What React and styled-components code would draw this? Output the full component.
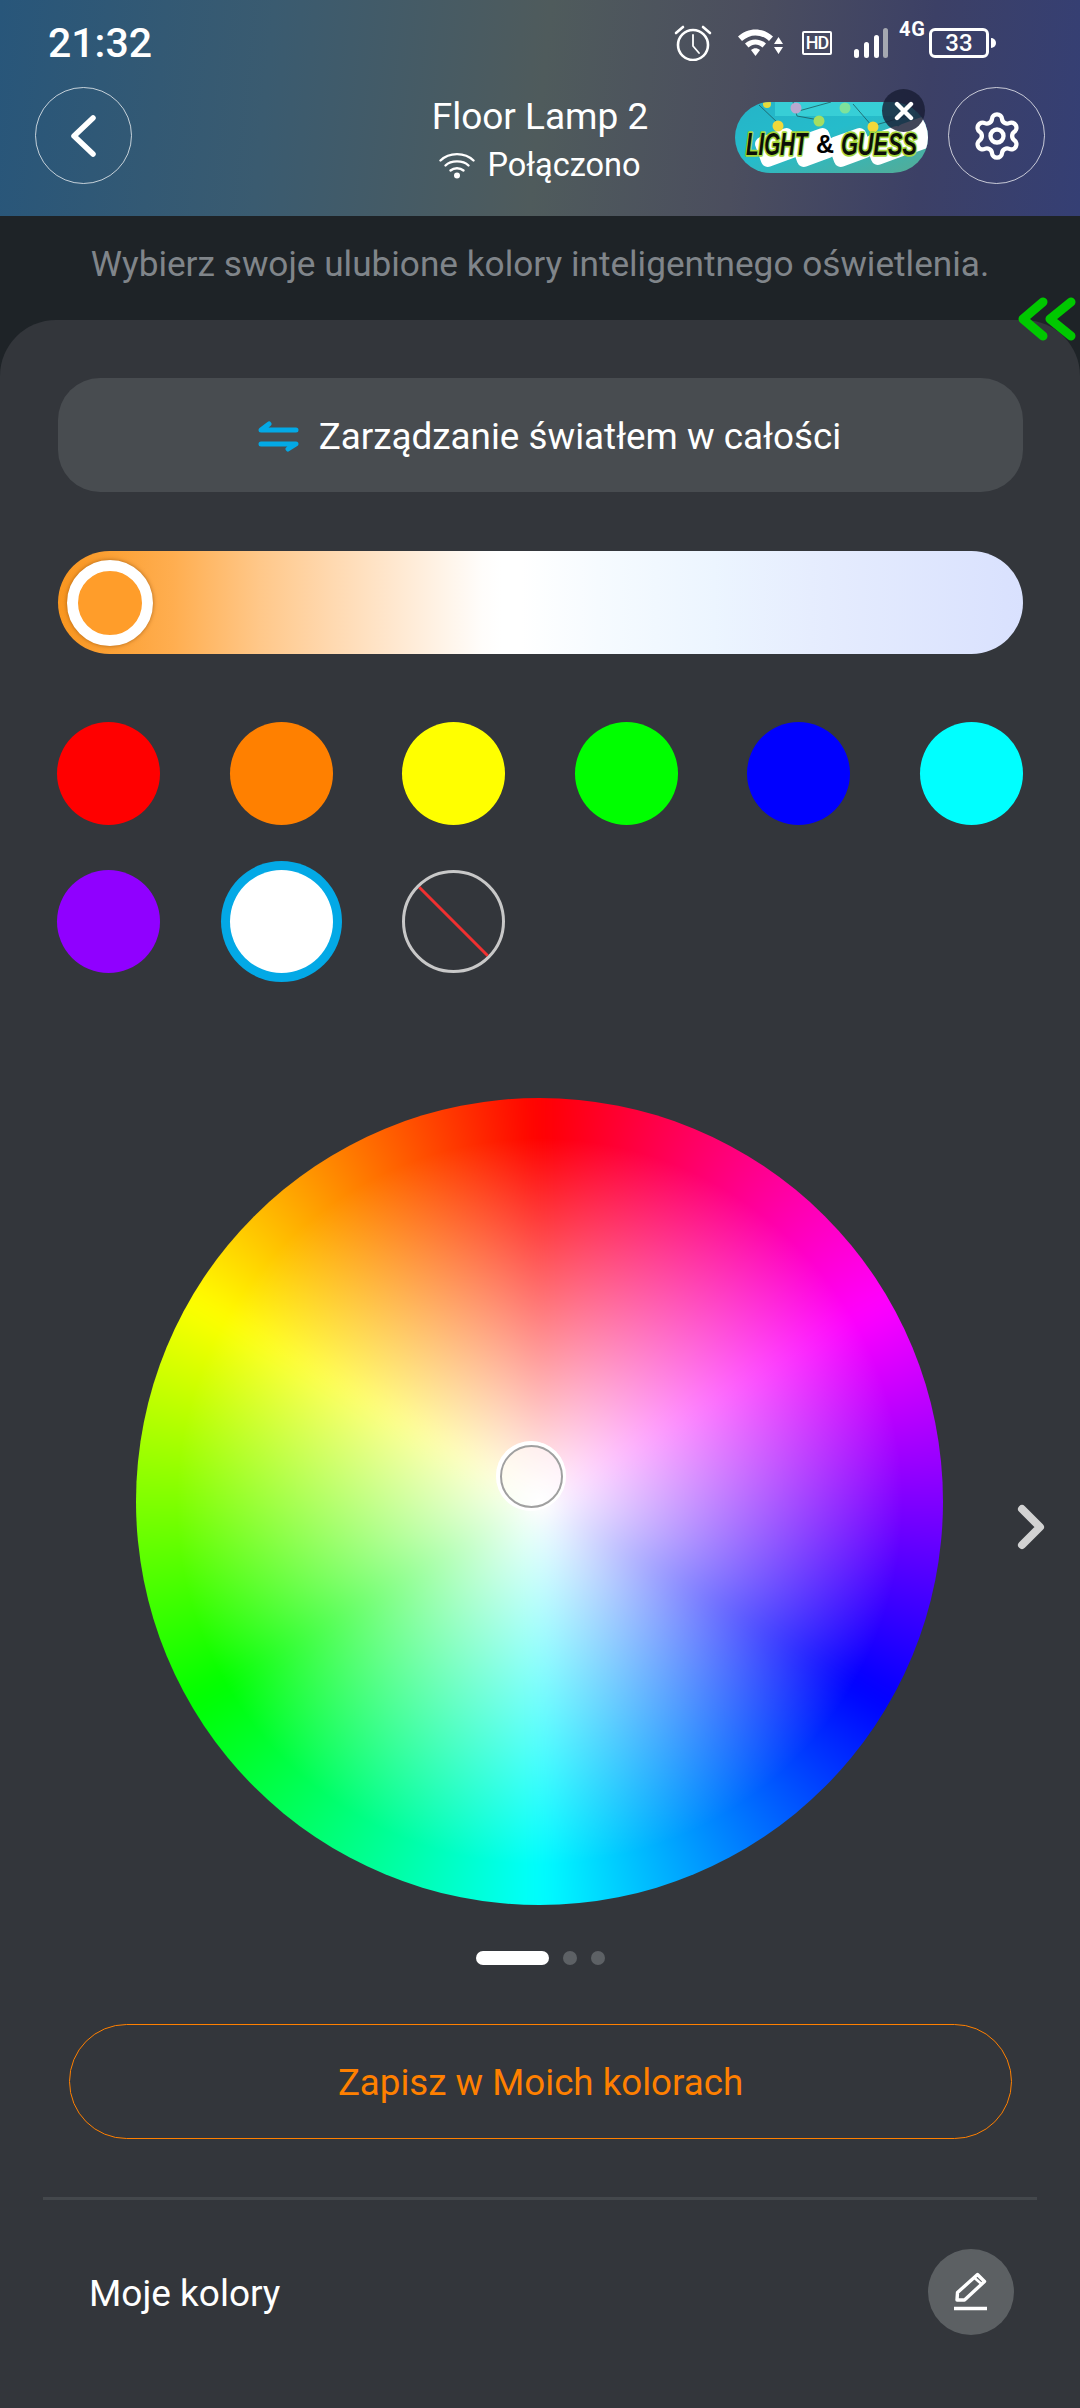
import styled, { createGlobalStyle } from "styled-components";
import { Settings } from "lucide-react";

const GlobalStyle = createGlobalStyle`
  html, body {
    margin: 0;
    padding: 0;
    background: #33363b;
  }
  * {
    box-sizing: border-box;
  }
`;

const Screen = styled.div`
  position: relative;
  width: 1080px;
  height: 2408px;
  overflow: hidden;
  display: flex;
  flex-direction: column;
  background: #1e2327;
  font-family: Roboto, "Noto Sans", sans-serif;
  color: #fff;
`;

const Header = styled.header`
  height: 216px;
  flex: none;
  background: linear-gradient(96deg, #28567a 0%, #3a5b70 25%, #4f5b5c 50%, #4b4e5e 68%, #3c4066 85%, #353f74 100%);
`;

const StatusBar = styled.div`
  height: 87px;
  display: flex;
  align-items: center;
  padding: 0 84px 2px 48px;
`;

const Time = styled.span`
  font-size: 41px;
  font-weight: 500;
  margin-right: auto;
`;

const StatusIcon = styled.svg`
  display: block;
  flex: none;
  margin-left: ${(p) => p.$gap || 0}px;
`;

const HdBadge = styled.span`
  width: 30px;
  height: 24px;
  margin-left: 18px;
  border: 2px solid #fff;
  border-radius: 2px;
  font-size: 18px;
  font-weight: 500;
  line-height: 20px;
  text-align: center;
  letter-spacing: -1px;
`;

const NetworkLabel = styled.span`
  align-self: flex-start;
  margin: 19px 3px 0 11px;
  font-size: 20px;
  line-height: 20px;
  font-weight: 700;
  letter-spacing: 1px;
`;

const Battery = styled.span`
  width: 60px;
  height: 30px;
  border: 3px solid #fff;
  border-radius: 6px;
  font-size: 24px;
  font-weight: 500;
  line-height: 24px;
  text-align: center;
`;

const BatteryTip = styled.span`
  width: 5px;
  height: 10px;
  margin-left: 2px;
  background: #fff;
  border-radius: 0 5px 5px 0;
`;

const NavRow = styled.div`
  display: grid;
  grid-template-columns: 1fr auto 1fr;
  align-items: center;
  height: 97px;
  padding: 0 35px;
`;

const RoundButton = styled.button`
  width: 97px;
  height: 97px;
  padding: 0;
  display: flex;
  align-items: center;
  justify-content: center;
  background: transparent;
  border: 1.5px solid rgba(255, 255, 255, 0.72);
  border-radius: 50%;
  color: #fff;
`;

const TitleBlock = styled.div`
  display: flex;
  flex-direction: column;
  align-items: center;
`;

const Title = styled.div`
  font-size: 37px;
  font-weight: 400;
  line-height: 42px;
  margin-top: 8px;
`;

const Connection = styled.div`
  display: flex;
  align-items: center;
  gap: 12px;
  margin-top: 9px;
  font-size: 32.5px;
  font-weight: 400;
  line-height: 36px;
`;

const NavRight = styled.div`
  display: flex;
  align-items: center;
  justify-content: flex-end;
  gap: 19px;
`;

const Promo = styled.div`
  position: relative;
  width: 193px;
  height: 71px;
  margin-top: 4px;
  margin-right: 1px;
`;

const PromoClose = styled.span`
  position: absolute;
  top: -13px;
  right: 3px;
  width: 43px;
  height: 43px;
  display: flex;
  align-items: center;
  justify-content: center;
  background: rgba(24, 29, 52, 0.82);
  border-radius: 50%;
`;

const Hint = styled.p`
  height: 104px;
  flex: none;
  margin: 0;
  padding-top: 27px;
  font-size: 35.2px;
  line-height: 42px;
  text-align: center;
  color: #80858a;
`;

const CollapseMark = styled.svg`
  position: absolute;
  top: 296px;
  left: 1016px;
`;

const Panel = styled.main`
  flex: 1;
  display: flex;
  flex-direction: column;
  padding: 58px 57px 0;
  background: #33363b;
  border-radius: 56px 56px 0 0;
`;

const ManageButton = styled.button`
  height: 114px;
  flex: none;
  margin-left: 1px;
  padding: 2px 0 0 18px;
  display: flex;
  align-items: center;
  justify-content: center;
  gap: 20px;
  background: #484c50;
  border: none;
  border-radius: 42px;
  color: #fff;
  font-family: inherit;
  font-size: 36.8px;
  font-weight: 400;
`;

const TempSlider = styled.div`
  position: relative;
  height: 103px;
  flex: none;
  margin: 59px 0 0 1px;
  border-radius: 52px;
  background: linear-gradient(
    90deg,
    #f9961f 0%,
    #ffae50 12%,
    #ffc88a 21%,
    #ffd8ae 28%,
    #ffe8d0 35%,
    #fff4e8 40%,
    #fffdfb 44%,
    #ffffff 46%,
    #ffffff 48%,
    #f6fbff 56%,
    #ecf5ff 68%,
    #e6edfe 78%,
    #d9e1fe 100%
  );
`;

const TempThumb = styled.span`
  position: absolute;
  top: 9px;
  left: 9px;
  width: 86px;
  height: 86px;
  background: #ff9d2a;
  border: 11px solid #fff;
  border-radius: 50%;
  box-shadow: 0 0 4px rgba(120, 60, 0, 0.6);
`;

const Swatches = styled.div`
  display: grid;
  grid-template-columns: repeat(6, 103px);
  justify-content: space-between;
  row-gap: 45px;
  margin-top: 68px;
`;

const Swatch = styled.span`
  width: 103px;
  height: 103px;
  border-radius: 50%;
  background: ${(p) => p.$color};
  box-shadow: ${(p) => (p.$selected ? "0 0 0 9px #03a9e6" : "none")};
`;

const NoColor = styled.span`
  width: 103px;
  height: 103px;
  display: block;
  overflow: hidden;
  border: 3px solid #c8c8c8;
  border-radius: 50%;
`;

const WheelArea = styled.div`
  position: relative;
  display: flex;
  justify-content: center;
  margin-top: 125px;
`;

const Wheel = styled.div`
  position: relative;
  width: 807px;
  height: 807px;
  flex: none;
  margin-left: -1px;
  overflow: hidden;
  border-radius: 50%;
  &::before {
    content: "";
    position: absolute;
    inset: -40px;
    background: conic-gradient(#ff0000, #ff00ff, #0000ff, #00ffff, #00ff00, #ffff00, #ff0000);
    filter: blur(12px);
  }
  &::after {
    content: "";
    position: absolute;
    inset: 0;
    background: radial-gradient(circle closest-side, #ffffff 0%, rgba(255, 255, 255, 0) 90%);
  }
`;

const WheelHandle = styled.span`
  position: absolute;
  top: 343px;
  left: 439px;
  width: 70px;
  height: 70px;
  background: rgba(255, 255, 255, 0.55);
  border-radius: 50%;
  box-shadow: inset 0 0 0 5px #fff;
  display: flex;
  align-items: center;
  justify-content: center;
  &::after {
    content: "";
    width: 59px;
    height: 59px;
    border: 2px solid #a0a0a0;
    border-radius: 50%;
  }
`;

const NextArrow = styled.svg`
  position: absolute;
  top: 405px;
  right: -24px;
`;

const Pager = styled.div`
  display: flex;
  justify-content: center;
  gap: 14px;
  margin-top: 46px;
`;

const PagerDot = styled.span`
  width: ${(p) => (p.$active ? 73 : 14)}px;
  height: 14px;
  border-radius: 7px;
  background: ${(p) => (p.$active ? "#fff" : "#5d6165")};
`;

const SaveButton = styled.button`
  height: 115px;
  flex: none;
  margin: 59px 11px 0 12px;
  padding: 2px 0 0;
  background: transparent;
  border: 1.5px solid #ff8000;
  border-radius: 58px;
  color: #ff8000;
  font-family: inherit;
  font-size: 36.7px;
  font-weight: 400;
`;

const Divider = styled.hr`
  height: 3px;
  flex: none;
  margin: 58px -14px 0;
  border: none;
  background: #44484c;
`;

const ColorsRow = styled.div`
  display: flex;
  align-items: center;
  justify-content: space-between;
  margin: 49px 9px 0 32px;
`;

const RowLabel = styled.span`
  margin-top: 2px;
  font-size: 37px;
  font-weight: 400;
`;

const EditButton = styled.button`
  width: 86px;
  height: 86px;
  padding: 0;
  display: flex;
  align-items: center;
  justify-content: center;
  background: #5c6063;
  border: none;
  border-radius: 50%;
`;

function PromoArt() {
  return (
    <svg width="193" height="71" viewBox="0 0 193 71">
      <defs>
        <linearGradient id="promoBg" x1="0" y1="0" x2="1" y2="1">
          <stop offset="0" stopColor="#25b4c8" />
          <stop offset="0.45" stopColor="#25bccb" />
          <stop offset="1" stopColor="#56ab94" />
        </linearGradient>
        <clipPath id="promoClip">
          <rect width="193" height="71" rx="35.5" />
        </clipPath>
      </defs>
      <g clipPath="url(#promoClip)">
        <rect width="193" height="71" fill="url(#promoBg)" />
        <rect x="40" width="140" height="14" fill="#3fd7dc" opacity="0.7" />
        <g fill="#fff">
          <rect x="22" y="30" width="40" height="31" rx="7" transform="rotate(-20 42 45)" />
          <rect x="58" y="30" width="40" height="31" rx="7" transform="rotate(-20 78 45)" />
          <rect x="95" y="30" width="40" height="31" rx="7" transform="rotate(-20 115 45)" />
          <rect x="132" y="28" width="40" height="31" rx="7" transform="rotate(-20 152 43)" />
          <rect x="164" y="18" width="34" height="31" rx="7" transform="rotate(-20 181 33)" />
        </g>
        <path d="M24 3 L44 22 M58 0 L62 14 L84 18 M96 0 L60 10 M118 2 L137 24 L172 14" stroke="#1d5a60" strokeWidth="0.8" fill="none" />
        <circle cx="32" cy="2" r="4" fill="#e7dc3c" />
        <circle cx="61" cy="6" r="5.5" fill="#b9a9cf" />
        <circle cx="110" cy="6" r="5.5" fill="#7fe29b" />
        <circle cx="84" cy="19" r="5.5" fill="#a5de62" />
        <circle cx="43" cy="24" r="5.5" fill="#f1d93a" />
        <circle cx="138" cy="25" r="5.5" fill="#f1d93a" />
        <g
          fontFamily="'Liberation Sans', sans-serif"
          fontWeight="700"
          fontStyle="italic"
          fontSize="31"
          stroke="#a4d63a"
          strokeWidth="3.5"
          paintOrder="stroke"
          strokeLinejoin="round"
          fill="#0c0f08"
        >
          <text transform="translate(11 53) scale(0.66 1)">LIGHT</text>
          <text transform="translate(106 53) scale(0.7 1)">GUESS</text>
        </g>
        <text
          x="81"
          y="51"
          fontFamily="'Liberation Sans', sans-serif"
          fontWeight="700"
          fontSize="25"
          fill="#000"
        >
          &amp;
        </text>
      </g>
    </svg>
  );
}

function WifiArcs() {
  return (
    <svg width="36" height="28" viewBox="0 0 36 28" fill="none" stroke="#fff" strokeWidth="2.4" strokeLinecap="round">
      <path d="M1.5 9.5 C10 1, 26 1, 34.5 9.5" />
      <path d="M6.5 14.5 C12 9, 24 9, 29.5 14.5" />
      <path d="M11.5 19.5 C15 16.5, 21 16.5, 24.5 19.5" />
      <circle cx="18" cy="24.5" r="3" fill="#fff" stroke="none" />
    </svg>
  );
}

export default function App() {
  const colors = ["#ff0000", "#ff8000", "#ffff00", "#00ff00", "#0000ff", "#00ffff", "#9000ff"];

  return (
    <Screen>
      <GlobalStyle />
      <Header>
        <StatusBar>
          <Time>21:32</Time>
          <StatusIcon width="38" height="36" viewBox="0 0 38 36" fill="none" stroke="#fff" strokeWidth="2.6" strokeLinecap="round">
            <circle cx="19" cy="20" r="15" />
            <path d="M19 10 V21 L25 28" strokeWidth="1.8" />
            <path d="M2 8 L9 2 M36 8 L29 2" />
          </StatusIcon>
          <StatusIcon $gap={26} width="46" height="28" viewBox="0 0 46 28" fill="#fff">
            <path d="M0 7.5 C10 -2, 25 -2, 35 7.5 L31 12 C23 4.5, 12 4.5, 4 12 Z" />
            <path d="M7 14.5 C13 9, 22 9, 28 14.5 L24.5 18.5 C20 14.5, 15 14.5, 10.5 18.5 Z" />
            <path d="M13 21 C16 18.5, 19 18.5, 22 21 L17.5 27 Z" />
            <path d="M40.5 8 L45 15 H36 Z M36 18 H45 L40.5 25 Z" />
          </StatusIcon>
          <HdBadge>HD</HdBadge>
          <StatusIcon $gap={22} width="34" height="30" viewBox="0 0 34 30" fill="#fff">
            <rect x="0" y="21" width="5" height="9" rx="2.5" />
            <rect x="10" y="14" width="5" height="16" rx="2.5" />
            <rect x="20" y="7" width="5" height="23" rx="2.5" />
            <rect x="29" y="0" width="5" height="30" rx="2.5" fill="#a5a8b0" />
          </StatusIcon>
          <NetworkLabel>4G</NetworkLabel>
          <Battery>33</Battery>
          <BatteryTip />
        </StatusBar>
        <NavRow>
          <RoundButton aria-label="Wstecz">
            <svg width="30" height="44" viewBox="0 0 30 44" fill="none" stroke="#fff" strokeWidth="5.5" strokeLinecap="round" strokeLinejoin="round">
              <path d="M24 4 L5 22 L24 40" />
            </svg>
          </RoundButton>
          <TitleBlock>
            <Title>Floor Lamp 2</Title>
            <Connection>
              <WifiArcs />
              Połączono
            </Connection>
          </TitleBlock>
          <NavRight>
            <Promo>
              <PromoArt />
              <PromoClose>
                <svg width="20" height="20" viewBox="0 0 20 20" stroke="#fff" strokeWidth="4.4" strokeLinecap="round">
                  <path d="M3 3 L17 17 M17 3 L3 17" />
                </svg>
              </PromoClose>
            </Promo>
            <RoundButton aria-label="Ustawienia">
              <Settings size={52} strokeWidth={2} />
            </RoundButton>
          </NavRight>
        </NavRow>
      </Header>

      <Hint>Wybierz swoje ulubione kolory inteligentnego oświetlenia.</Hint>

      <Panel>
        <ManageButton>
          <svg width="41" height="31" viewBox="0 0 41 31" fill="none" stroke="#03a9e6" strokeWidth="5" strokeLinecap="round" strokeLinejoin="round">
            <path d="M38 9 H3 L11 3" />
            <path d="M3 23 H38 L30 28" />
          </svg>
          Zarządzanie światłem w całości
        </ManageButton>

        <TempSlider>
          <TempThumb />
        </TempSlider>

        <Swatches>
          {colors.map((color) => (
            <Swatch key={color} $color={color} />
          ))}
          <Swatch $color="#ffffff" $selected />
          <NoColor>
            <svg width="97" height="97" viewBox="0 0 97 97" stroke="#f03030" strokeWidth="3">
              <path d="M14 14 L83 83" />
            </svg>
          </NoColor>
        </Swatches>

        <WheelArea>
          <Wheel />
          <WheelHandle />
          <NextArrow width="32" height="48" viewBox="0 0 32 48" fill="none" stroke="#d2d2d2" strokeWidth="8" strokeLinecap="round" strokeLinejoin="round">
            <path d="M7 6 L25 24 L7 42" />
          </NextArrow>
        </WheelArea>

        <Pager>
          <PagerDot $active />
          <PagerDot />
          <PagerDot />
        </Pager>

        <SaveButton>Zapisz w Moich kolorach</SaveButton>
        <Divider />

        <ColorsRow>
          <RowLabel>Moje kolory</RowLabel>
          <EditButton aria-label="Edytuj">
            <svg width="86" height="86" viewBox="0 0 86 86" fill="none" stroke="#fff" strokeWidth="3.4" strokeLinejoin="round">
              <path d="M29 51 L29.5 43.5 L49.5 25.5 L56.5 32.5 L36.5 51 Z" />
              <path d="M45.5 28 L53.5 35" strokeWidth="2.6" />
              <path d="M26 59.5 H59" />
            </svg>
          </EditButton>
        </ColorsRow>
      </Panel>

      <CollapseMark width="64" height="50" viewBox="0 0 64 50" fill="none" stroke="#00c800" strokeWidth="9" strokeLinecap="round" strokeLinejoin="round">
        <path d="M27 6 L7 23 L27 40" />
        <path d="M55 6 L34 23 L55 40" />
      </CollapseMark>
    </Screen>
  );
}
